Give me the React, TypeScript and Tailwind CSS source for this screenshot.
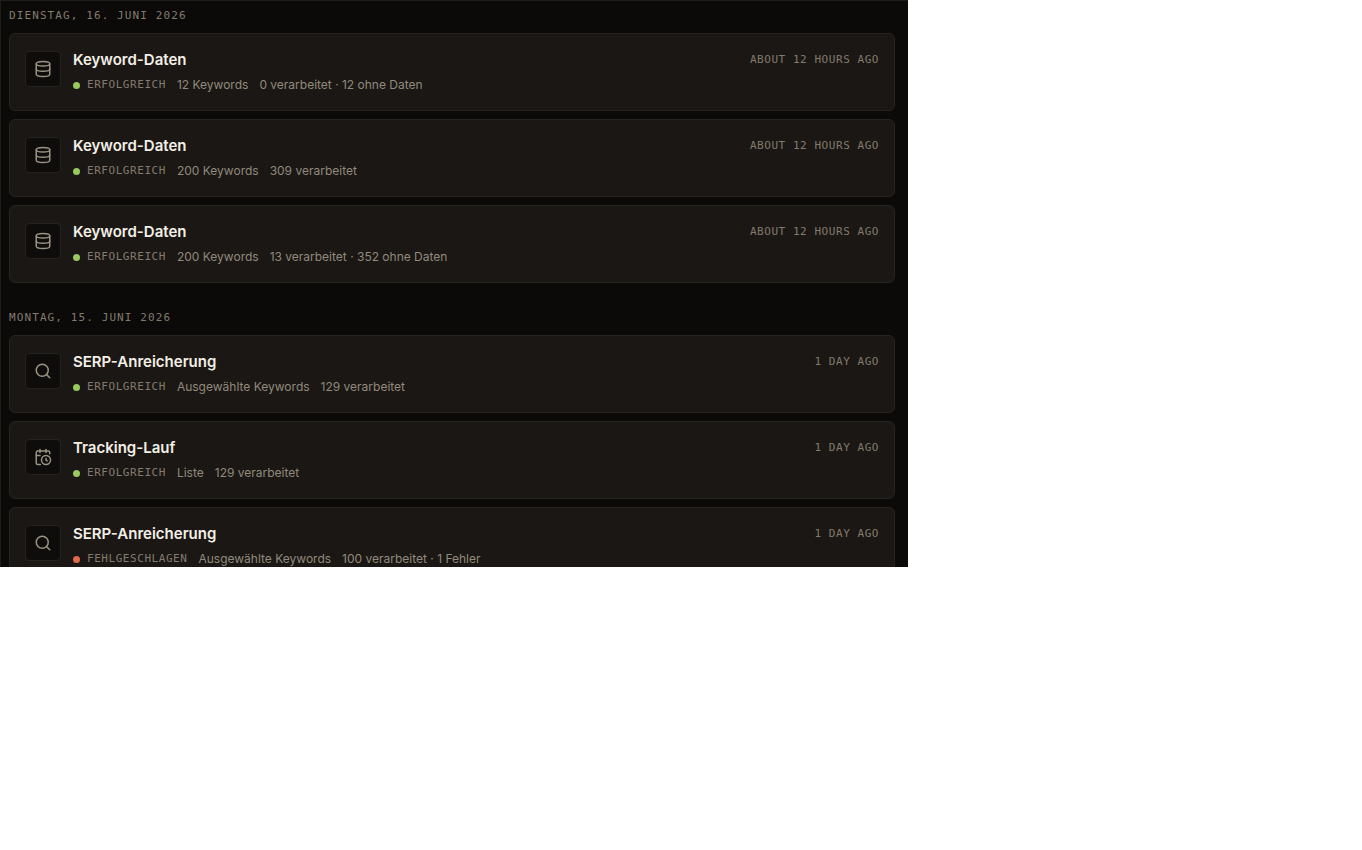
import { CalendarClock, Database, Search, type LucideIcon } from 'lucide-react';

type Run = {
  id: number;
  title: string;
  icon: LucideIcon;
  failed?: boolean;
  scope: string;
  result: string;
  time: string;
};

type Day = { label: string; runs: Run[] };

const days: Day[] = [
  {
    label: 'Dienstag, 16. Juni 2026',
    runs: [
      { id: 1, title: 'Keyword-Daten', icon: Database, scope: '12 Keywords', result: '0 verarbeitet · 12 ohne Daten', time: 'about 12 hours ago' },
      { id: 2, title: 'Keyword-Daten', icon: Database, scope: '200 Keywords', result: '309 verarbeitet', time: 'about 12 hours ago' },
      { id: 3, title: 'Keyword-Daten', icon: Database, scope: '200 Keywords', result: '13 verarbeitet · 352 ohne Daten', time: 'about 12 hours ago' },
    ],
  },
  {
    label: 'Montag, 15. Juni 2026',
    runs: [
      { id: 4, title: 'SERP-Anreicherung', icon: Search, scope: 'Ausgewählte Keywords', result: '129 verarbeitet', time: '1 day ago' },
      { id: 5, title: 'Tracking-Lauf', icon: CalendarClock, scope: 'Liste', result: '129 verarbeitet', time: '1 day ago' },
      { id: 6, title: 'SERP-Anreicherung', icon: Search, failed: true, scope: 'Ausgewählte Keywords', result: '100 verarbeitet · 1 Fehler', time: '1 day ago' },
    ],
  },
];

function RunCard({ run }: { run: Run }) {
  const Icon = run.icon;
  return (
    <li className="flex items-start gap-3 rounded-md border border-[#282521] bg-[#1b1714] px-[15px] pt-3.5 pb-[15px]">
      <div className="mt-[3px] flex size-9 shrink-0 items-center justify-center rounded border border-[#26231f] bg-[#0e0d0c] text-[#9a9282]">
        <Icon size={18} strokeWidth={2} />
      </div>
      <div className="min-w-0 flex-1">
        <div className="flex items-center justify-between gap-3">
          <h3 className="text-[15px] leading-6 font-semibold text-[#f3efe6]">{run.title}</h3>
          <time className="shrink-0 font-['DejaVu_Sans_Mono',monospace] text-[11px] tracking-wider text-[#827b6e] uppercase">{run.time}</time>
        </div>
        <div className="mt-[3px] flex flex-wrap items-center gap-x-[11px] text-xs leading-5 text-[#918a7c]">
          <span className="flex items-center gap-[7px] font-['DejaVu_Sans_Mono',monospace] text-[11px] leading-5 tracking-wider text-[#827b6e] uppercase">
            <span className={`size-[7px] rounded-full ${run.failed ? 'bg-[#e06a4a]' : 'bg-[#97c95c]'}`} />
            {run.failed ? 'Fehlgeschlagen' : 'Erfolgreich'}
          </span>
          <span>{run.scope}</span>
          <span>{run.result}</span>
        </div>
      </div>
    </li>
  );
}

export default function App() {
  return (
    <main className="h-[66.7vh] w-2/3 overflow-hidden border-t border-l border-[#1f1d1a] bg-[#0b0a08] pt-1.5 pr-[13px] pl-2 font-[Inter,sans-serif]">
      <div className="flex flex-col gap-[26px]">
        {days.map((day) => (
          <section key={day.label}>
            <h2 className="mb-2 font-['DejaVu_Sans_Mono',monospace] text-[11px] leading-[18px] tracking-widest text-[#827b6e] uppercase">{day.label}</h2>
            <ul className="flex flex-col gap-2">
              {day.runs.map((run) => (
                <RunCard key={run.id} run={run} />
              ))}
            </ul>
          </section>
        ))}
      </div>
    </main>
  );
}
